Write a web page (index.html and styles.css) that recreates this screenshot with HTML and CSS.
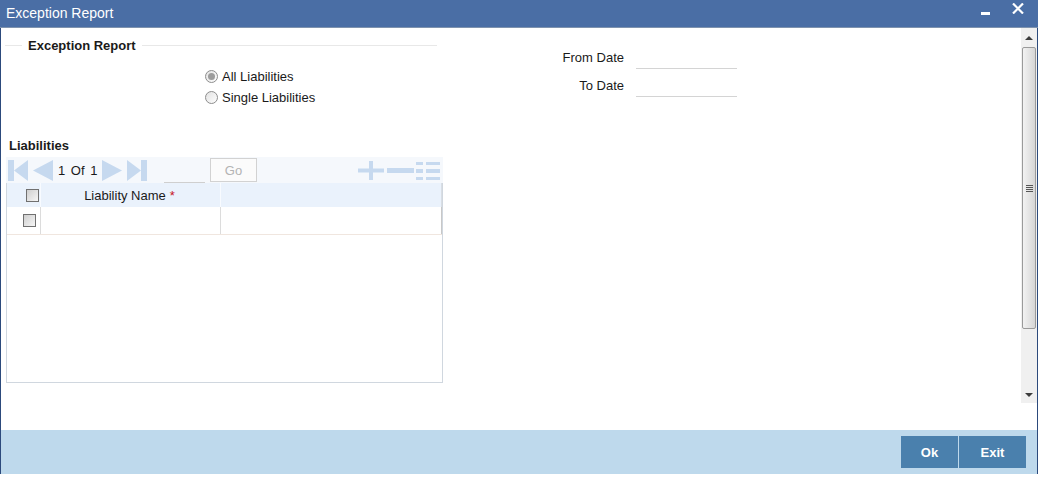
FILE: index.html
```html
<!DOCTYPE html>
<html lang="en">
<head>
  <meta charset="UTF-8" />
  <title>Exception Report</title>
  <link rel="stylesheet" href="styles.css">
</head>
<body>
  <div class="window">
    <div class="titlebar">
      <span class="title">Exception Report</span>
      <span class="min-btn"></span>
      <svg class="close-btn" width="12" height="11" viewBox="0 0 12 11">
        <path d="M1 0.5 L11 10.5 M11 0.5 L1 10.5" stroke="#fff" stroke-width="2.2" fill="none"/>
      </svg>
    </div>

    <div class="main">
      <div class="content">
        <div class="top">
          <div class="criteria">
            <div class="section-head"><span>Exception Report</span></div>
            <div class="radios">
              <label class="radio"><span class="dot on"></span>All Liabilities</label>
              <label class="radio"><span class="dot"></span>Single Liabilities</label>
            </div>
          </div>
          <div class="dates">
            <label>From Date</label><span class="field"></span>
            <label>To Date</label><span class="field"></span>
          </div>
        </div>

        <h2 class="grid-title">Liabilities</h2>
        <div class="grid">
          <div class="toolbar">
            <svg class="pg pg-first" width="20" height="21" viewBox="0 0 20 21"><rect x="0" y="0" width="6" height="21"/><polygon points="20,0 20,21 6,10.5"/></svg>
            <svg class="pg pg-prev" width="20" height="21" viewBox="0 0 20 21"><polygon points="20,0 20,21 0,10.5"/></svg>
            <span class="pg-text">1 Of 1</span>
            <svg class="pg pg-next" width="20" height="21" viewBox="0 0 20 21"><polygon points="0,0 0,21 20,10.5"/></svg>
            <svg class="pg pg-last" width="20" height="21" viewBox="0 0 20 21"><polygon points="0,0 0,21 14,10.5"/><rect x="14" y="0" width="6" height="21"/></svg>
            <span class="pg-input"></span>
            <button class="go-btn">Go</button>
            <span class="spacer"></span>
            <svg class="tb-icon" width="26" height="19" viewBox="0 0 26 19"><rect x="0" y="7.5" width="26" height="4"/><rect x="11" y="0" width="4" height="19"/></svg>
            <svg class="tb-icon tb-minus" width="27" height="19" viewBox="0 0 27 19"><rect x="0" y="7" width="27" height="5"/></svg>
            <svg class="tb-icon tb-list" width="24" height="19" viewBox="0 0 24 19"><rect x="0" y="1" width="7" height="3"/><rect x="10" y="1" width="14" height="3"/><rect x="0" y="8" width="7" height="4"/><rect x="10" y="8" width="14" height="4"/><rect x="0" y="16" width="7" height="3"/><rect x="10" y="16" width="14" height="3"/></svg>
          </div>
          <div class="table">
            <div class="row head">
              <div class="cell cb-cell"><span class="checkbox"></span></div>
              <div class="cell name-cell">Liability Name <span class="req">*</span></div>
              <div class="cell last-cell"></div>
            </div>
            <div class="row body-row">
              <div class="cell cb-cell"><span class="checkbox"></span></div>
              <div class="cell name-cell"></div>
              <div class="cell last-cell"></div>
            </div>
          </div>
        </div>
      </div>

      <div class="scrollbar">
        <div class="sb-btn"><span class="arrow-up"></span></div>
        <div class="sb-thumb"><span class="grip"></span></div>
        <div class="sb-track"></div>
        <div class="sb-btn"><span class="arrow-down"></span></div>
      </div>
    </div>

    <div class="footer">
      <button class="btn">Ok</button>
      <button class="btn btn-exit">Exit</button>
    </div>
  </div>
</body>
</html>
```

FILE: styles.css
```css
* { box-sizing: border-box; margin: 0; padding: 0; }
html, body {
  width: 100%; height: 100%;
  background: #fff;
  font-family: "Liberation Sans", Arial, sans-serif;
  font-size: 13px;
  color: #1a1a1a;
  overflow: hidden;
}
.window {
  width: 1038px;
  display: flex;
  flex-direction: column;
}

/* title bar */
.titlebar {
  height: 28px;
  background: #4a6ea5;
  border-bottom: 1px solid #7f93ae;
  display: flex;
  align-items: center;
  color: #fff;
  padding: 0 14px 2px 6px;
}
.title { font-size: 14px; flex: 1; }
.min-btn {
  width: 9px; height: 3px;
  background: #fff;
  margin-top: 2px;
  margin-right: 22px;
}
.close-btn { margin-bottom: 8px; }

/* body */
.main {
  height: 402px;
  display: flex;
  border-left: 1px solid #2c4a7c;
  border-right: 1px solid #2c4a7c;
}
.content { flex: 1; }
.top { display: flex; height: 110px; }
.criteria { width: 436px; }
.section-head {
  display: flex;
  align-items: center;
  margin-top: 9px;
  margin-left: 4px;
  height: 16px;
  font-weight: bold;
}
.section-head::before,
.section-head::after {
  content: "";
  height: 1px;
  background: #e8e8e8;
}
.section-head::before { width: 17px; }
.section-head::after { flex: 1; }
.section-head span { padding: 0 6px; }

.radios {
  margin: 13px 0 0 204px;
  display: flex;
  flex-direction: column;
}
.radio {
  display: flex;
  align-items: center;
  height: 21px;
}
.dot {
  width: 13px; height: 13px;
  border-radius: 50%;
  border: 1px solid #8d8d8d;
  background: linear-gradient(135deg, #e2e2e2, #fdfdfd);
  margin-right: 4px;
  display: flex;
  align-items: center;
  justify-content: center;
}
.dot.on::after {
  content: "";
  width: 7px; height: 7px;
  border-radius: 50%;
  background: #9c9c9c;
}

.dates {
  margin: 16px 0 0 67px;
  display: grid;
  grid-template-columns: 120px 101px;
  grid-auto-rows: 28px;
  column-gap: 12px;
  align-self: flex-start;
}
.dates label { text-align: right; line-height: 28px; }
.field { height: 25px; border-bottom: 1px solid #d4d4d4; }

/* grid */
.grid-title {
  font-size: 13px;
  font-weight: bold;
  padding-left: 8px;
  height: 16px;
  line-height: 16px;
  margin-bottom: 3px;
}
.grid { margin-left: 5px; width: 437px; }
.toolbar {
  height: 26px;
  background: #f5f8fc;
  display: flex;
  align-items: center;
  padding-right: 3px;
}
.pg { fill: #c6d9ef; }
.pg-first { margin-left: 2px; }
.pg-prev { margin-left: 5px; }
.pg-text { margin-left: 5px; width: 39px; word-spacing: 2px; white-space: nowrap; }
.pg-next { margin-left: 5px; }
.pg-last { margin-left: 5px; }
.pg-input {
  margin-left: 17px;
  width: 41px; height: 24px;
  border-bottom: 1px solid #cfcfcf;
  align-self: flex-end;
}
.go-btn {
  margin-left: 5px;
  width: 47px; height: 24px;
  border: 1px solid #d2d2d2;
  background: #fbfbfb;
  color: #b3b3b3;
  font: 13px "Liberation Sans", Arial, sans-serif;
}
.spacer { flex: 1; }
.tb-icon { fill: #c6d9ef; }
.tb-minus { margin-left: 3px; }
.tb-list { margin-left: 2px; }

.table {
  height: 200px;
  border: 1px solid #d0d7df;
  border-top: none;
}
.row { display: flex; }
.cell { display: flex; align-items: center; }
.cb-cell { width: 34px; }
.name-cell { width: 180px; }
.last-cell { width: 221px; }
.head { height: 24px; background: #eaf2fc; }
.head .cell { border-right: 1px solid #f8fbff; }
.head .cb-cell { justify-content: flex-end; padding-right: 1px; }
.head .name-cell { justify-content: center; padding-right: 2px; }
.head .last-cell { border-right-color: #d9dee4; }
.req { color: #c8141e; margin-left: 4px; }
.body-row { height: 28px; border-bottom: 1px solid #f0e6df; }
.body-row .cell { border-right: 1px solid #dcdcdc; }
.body-row .cb-cell { padding-left: 16px; }
.body-row .last-cell { border-right-color: #c8c8c8; }
.checkbox {
  width: 13px; height: 13px;
  border: 1px solid #707070;
  background: linear-gradient(135deg, #cfcfcf, #f6f6f6);
}

/* scrollbar */
.scrollbar {
  width: 16px;
  height: 375px;
  background: #f0f0f0;
  display: flex;
  flex-direction: column;
}
.sb-btn {
  height: 18px;
  display: flex;
  align-items: center;
  justify-content: center;
}
.arrow-up, .arrow-down {
  width: 0; height: 0;
  border-left: 4px solid transparent;
  border-right: 4px solid transparent;
}
.arrow-up { border-bottom: 4px solid #3c3c3c; margin-top: 2px; }
.arrow-down { border-top: 4px solid #3c3c3c; margin-top: 2px; }
.sb-thumb {
  height: 282px;
  margin: 1px 1px 0 1px;
  border: 1px solid #9a9a9a;
  border-radius: 2px;
  background: linear-gradient(90deg, #f2f2f2, #e4e4e4 50%, #d6d6d6);
  display: flex;
  align-items: center;
  justify-content: center;
}
.grip {
  width: 7px; height: 7px;
  background: repeating-linear-gradient(180deg, #555 0 1px, transparent 1px 2px);
}
.sb-track { flex: 1; }

/* footer */
.footer {
  height: 44px;
  background: #bed9ec;
  border-left: 1px solid #2c4a7c;
  border-right: 1px solid #2c4a7c;
  display: flex;
  justify-content: flex-end;
  align-items: center;
  gap: 1px;
  padding-right: 11px;
}
.btn {
  width: 57px; height: 32px;
  border: none;
  background: #4a80ad;
  color: #fff;
  font: bold 13px "Liberation Sans", Arial, sans-serif;
}
.btn-exit { width: 67px; }
```
